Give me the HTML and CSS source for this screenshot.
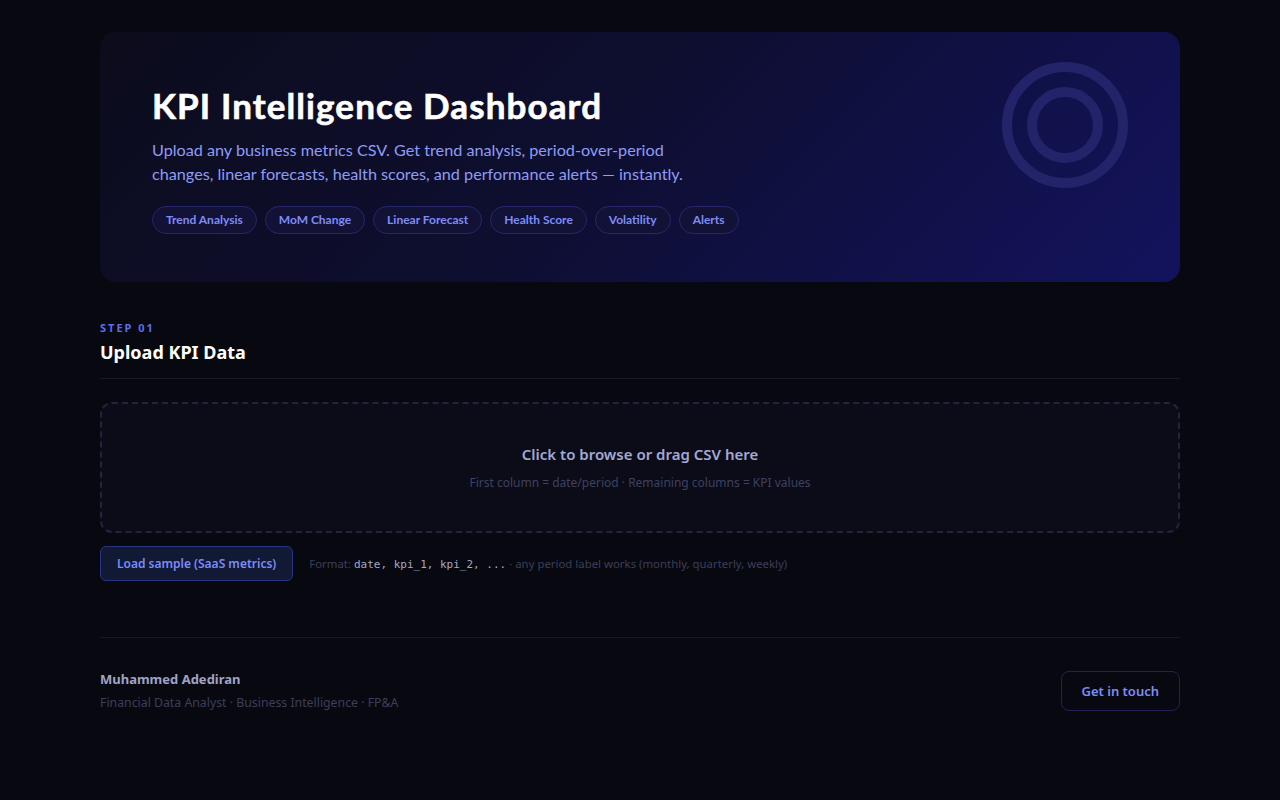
FILE: index.html
```html
<!DOCTYPE html>
<html>
<head>
    <title>KPI Intelligence Dashboard</title>
    <link rel="stylesheet" href="styles.css">
</head>
<body>
    <div class="page">
        <header class="hero">
            <svg class="hero-mark" width="130" height="130" viewBox="0 0 130 130">
                <circle cx="65" cy="65" r="58" fill="none" stroke="#23236a" stroke-width="10"/>
                <circle cx="65" cy="65" r="33" fill="none" stroke="#23236a" stroke-width="10"/>
            </svg>
            <h1>KPI Intelligence Dashboard</h1>
            <p class="lead">Upload any business metrics CSV. Get trend analysis, period-over-period changes, linear forecasts, health scores, and performance alerts — instantly.</p>
            <div class="tags">
                <span class="tag">Trend Analysis</span>
                <span class="tag">MoM Change</span>
                <span class="tag">Linear Forecast</span>
                <span class="tag">Health Score</span>
                <span class="tag">Volatility</span>
                <span class="tag">Alerts</span>
            </div>
        </header>

        <section class="step">
            <div class="step-label">STEP 01</div>
            <h2>Upload KPI Data</h2>
            <label class="dropzone">
                <input type="file" accept=".csv" hidden>
                <span class="drop-title">Click to browse or drag CSV here</span>
                <span class="drop-sub">First column = date/period · Remaining columns = KPI values</span>
            </label>
            <div class="sample-row">
                <button class="sample-btn">Load sample (SaaS metrics)</button>
                <span class="format">Format: <code>date, kpi_1, kpi_2, ...</code> · any period label works (monthly, quarterly, weekly)</span>
            </div>
        </section>

        <footer class="footer">
            <div>
                <div class="author">Muhammed Adediran</div>
                <div class="role">Financial Data Analyst · Business Intelligence · FP&amp;A</div>
            </div>
            <a class="contact" href="#">Get in touch</a>
        </footer>
    </div>
</body>
</html>
```

FILE: styles.css
```css
body {
    margin: 0;
    background: #080910;
    font-family: "Noto Sans", sans-serif;
    color: #e5e7f5;
}

.page {
    width: 1080px;
    margin: 0 auto;
    padding: 32px 0 60px;
}

.hero {
    position: relative;
    overflow: hidden;
    height: 250px;
    box-sizing: border-box;
    padding: 52px 52px 0;
    border-radius: 16px;
    background: linear-gradient(135deg, #0c0c1c 0%, #0e0e30 45%, #13135e 100%);
    font-family: Lato, "Noto Sans", sans-serif;
}

.hero-mark {
    position: absolute;
    top: 28px;
    right: 50px;
}

h1 {
    margin: 0;
    font-size: 35px;
    font-weight: 700;
    letter-spacing: 1.1px;
    -webkit-text-stroke: 0.6px #fff;
    color: #fff;
    line-height: 42px;
}

.lead {
    margin: 12px 0 0;
    max-width: 560px;
    font-size: 16.2px;
    line-height: 24px;
    color: #8f9cf5;
}

.tags {
    display: flex;
    gap: 8px;
    margin-top: 20px;
}

.tag {
    padding: 0 13px;
    height: 28px;
    line-height: 26px;
    box-sizing: border-box;
    border: 1px solid #25276a;
    border-radius: 14px;
    background: #111236;
    color: #7f8cf7;
    font-size: 12px;
    font-weight: 700;
}

.step {
    margin-top: 38px;
}

.step-label {
    font-size: 11px;
    font-weight: 700;
    letter-spacing: 2px;
    color: #5b6cf0;
}

h2 {
    margin: 5px 0 0;
    padding-bottom: 14px;
    border-bottom: 1px solid #191b2a;
    font-size: 18px;
    font-weight: 700;
    color: #fff;
}

.dropzone {
    display: flex;
    flex-direction: column;
    align-items: center;
    justify-content: center;
    gap: 10px;
    height: 131px;
    box-sizing: border-box;
    margin-top: 23px;
    border: 2px dashed #22243a;
    border-radius: 12px;
    background: #0b0c18;
    cursor: pointer;
}

.drop-title {
    font-size: 15px;
    font-weight: 600;
    color: #a4a8d4;
}

.drop-sub {
    font-size: 12px;
    color: #3e4160;
}

.sample-row {
    display: flex;
    align-items: center;
    gap: 16px;
    margin-top: 13px;
}

.sample-btn {
    height: 35px;
    padding: 0 16px;
    border: 1px solid #283583;
    border-radius: 6px;
    background: #111935;
    color: #7c8cf8;
    font-family: inherit;
    font-size: 12px;
    font-weight: 600;
    cursor: pointer;
}

.format {
    font-size: 11.4px;
    color: #3b3e5a;
}

.format code {
    font-family: "DejaVu Sans Mono", monospace;
    font-size: 11px;
    color: #a3a8c4;
}

.footer {
    display: flex;
    align-items: center;
    justify-content: space-between;
    margin-top: 56px;
    padding-top: 32px;
    border-top: 1px solid #161827;
}

.author {
    font-size: 13px;
    font-weight: 700;
    color: #9fa3c8;
}

.role {
    margin-top: 6px;
    font-size: 12.3px;
    color: #3b3e58;
}

.contact {
    padding: 10px 20px;
    line-height: 18px;
    border: 1px solid #222156;
    border-radius: 8px;
    color: #7c8cf8;
    font-size: 13px;
    font-weight: 600;
    text-decoration: none;
}
```
